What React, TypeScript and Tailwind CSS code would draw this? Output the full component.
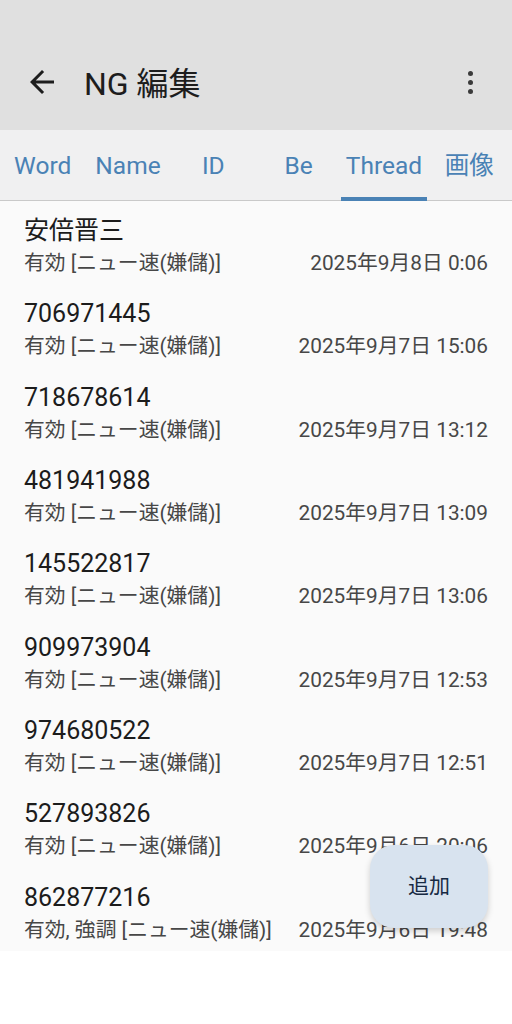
import React from "react";

const tabs = ["Word", "Name", "ID", "Be", "Thread", "画像"];

const items = [
  { title: "安倍晋三", status: "有効", date: "2025年9月8日 0:06" },
  { title: "706971445", status: "有効", date: "2025年9月7日 15:06" },
  { title: "718678614", status: "有効", date: "2025年9月7日 13:12" },
  { title: "481941988", status: "有効", date: "2025年9月7日 13:09" },
  { title: "145522817", status: "有効", date: "2025年9月7日 13:06" },
  { title: "909973904", status: "有効", date: "2025年9月7日 12:53" },
  { title: "974680522", status: "有効", date: "2025年9月7日 12:51" },
  { title: "527893826", status: "有効", date: "2025年9月6日 20:06" },
  { title: "862877216", status: "有効, 強調", date: "2025年9月6日 19:48" },
];

const font = {
  fontFamily: 'Roboto, "Noto Sans CJK JP", sans-serif',
};

export default function App() {
  return (
    <div className="relative w-[512px] h-[1024px] bg-white overflow-hidden" style={font}>
      {/* App bar */}
      <div className="h-[130px] bg-[#e0e0e0] flex items-end">
        <div className="h-[96px] w-full flex items-center">
          <button className="w-[36px] h-[36px] ml-[24px] flex items-center justify-center text-[#1d1d1d]">
            <svg width="36" height="36" viewBox="0 0 24 24" fill="currentColor">
              <path d="M20 11H7.83l5.59-5.59L12 4l-8 8 8 8 1.41-1.41L7.83 13H20v-2z" />
            </svg>
          </button>
          <h1 className="ml-[24px] mt-[4px] text-[32px] text-[#1d1d1d] leading-none">NG 編集</h1>
          <div className="ml-auto mr-[24px] w-[36px] h-[36px] flex flex-col items-center justify-center gap-[4px]">
            <span className="w-[5px] h-[5px] rounded-full bg-[#3a3a3a]" />
            <span className="w-[5px] h-[5px] rounded-full bg-[#3a3a3a]" />
            <span className="w-[5px] h-[5px] rounded-full bg-[#3a3a3a]" />
          </div>
        </div>
      </div>

      {/* Tabs */}
      <div className="h-[71px] bg-[#f0f0f1] border-b border-[#c9c9c9] grid grid-cols-6">
        {tabs.map((t) => (
          <div key={t} className="relative flex items-center justify-center pt-[2px]">
            <span className="text-[24.5px] text-[#4a82b5] whitespace-nowrap">{t}</span>
            {t === "Thread" && (
              <span className="absolute left-0 right-0 bottom-[-1px] h-[4px] bg-[#4a82b5]" />
            )}
          </div>
        ))}
      </div>

      {/* List */}
      <div className="bg-[#fafafa]">
        {items.map((it) => (
          <div key={it.title} className="px-[24px] pt-[14px] pb-[5.33px]">
            <div className="text-[25px] leading-[32px] text-[#1c1c1c]">{it.title}</div>
            <div className="flex justify-between items-center text-[20.8px] leading-[32px] text-[#474747]">
              <span>
                {it.status} [ニュー速(嫌儲)]
              </span>
              <span>{it.date}</span>
            </div>
          </div>
        ))}
      </div>

      {/* FAB */}
      <button className="absolute left-[370px] top-[845px] w-[118px] h-[83px] rounded-[24px] bg-[#d8e3ef] shadow-[0_3px_6px_rgba(0,0,0,0.18)] flex items-center justify-center text-[21px] text-[#172a43]">
        追加
      </button>
    </div>
  );
}
